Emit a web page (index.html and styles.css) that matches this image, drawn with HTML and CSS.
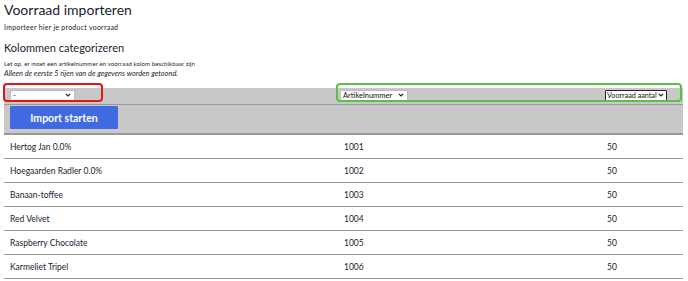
FILE: index.html
```html
<!DOCTYPE html>
<html lang="nl">

<head>
    <meta charset="UTF-8">
    <meta name="viewport" content="width=device-width, initial-scale=1.0">
    <title>Voorraad importeren</title>
    <link rel="stylesheet" href="styles.css">
</head>

<body>
    <div class="page">
        <h1>Voorraad importeren</h1>
        <p class="intro">Importeer hier je product voorraad</p>
        <h2>Kolommen categorizeren</h2>
        <p class="note">Let op, er moet een artikelnummer en voorraad kolom beschikbaar zijn</p>
        <p class="preview-note">Alleen de eerste 5 rijen van de gegevens worden getoond.</p>

        <div class="table-wrap">
            <table class="import-table">
                <thead>
                    <tr class="select-row">
                        <th class="col-name">
                            <select class="col-select select-empty">
                                <option>-</option>
                            </select>
                        </th>
                        <th class="col-code">
                            <select class="col-select select-code">
                                <option>Artikelnummer</option>
                            </select>
                        </th>
                        <th class="col-stock">
                            <select class="col-select select-focus">
                                <option>Voorraad aantal</option>
                            </select>
                        </th>
                    </tr>
                    <tr class="action-row">
                        <th colspan="3">
                            <button type="button" class="start-button">Import starten</button>
                        </th>
                    </tr>
                </thead>
                <tbody>
                    <tr><td>Hertog Jan 0.0%</td><td>1001</td><td>50</td></tr>
                    <tr><td>Hoegaarden Radler 0.0%</td><td>1002</td><td>50</td></tr>
                    <tr><td>Banaan-toffee</td><td>1003</td><td>50</td></tr>
                    <tr><td>Red Velvet</td><td>1004</td><td>50</td></tr>
                    <tr><td>Raspberry Chocolate</td><td>1005</td><td>50</td></tr>
                    <tr><td>Karmeliet Tripel</td><td>1006</td><td>50</td></tr>
                </tbody>
            </table>

            <!-- annotatie-kaders over de kolomkeuzes -->
            <div class="mark mark-red"></div>
            <div class="mark mark-green"></div>
        </div>
    </div>
</body>

</html>
```

FILE: styles.css
```css
body {
    margin: 0;
    background: #ffffff;
    font-family: "Lato", "Open Sans", sans-serif;
    color: #1c1c30;
}

.page {
    padding: 0 5px 0 4px;
}

h1 {
    margin: 0;
    padding-top: 1px;
    font-size: 14px;
    font-weight: 400;
    line-height: 18px;
}

.intro {
    margin: 4px 0 0;
    font-size: 7px;
    letter-spacing: 0.25px;
    line-height: 9px;
}

h2 {
    margin: 8px 0 0;
    font-size: 11px;
    font-weight: 400;
    line-height: 15px;
}

.note {
    margin: 5px 0 0;
    font-size: 6px;
    letter-spacing: 0.1px;
    line-height: 8px;
}

.preview-note {
    margin: 1px 0 0;
    font-size: 7.4px;
    font-style: italic;
    line-height: 10px;
}

.table-wrap {
    position: relative;
    margin-top: 9px;
}

.import-table {
    width: 100%;
    border-collapse: collapse;
    font-size: 8.5px;
}

.col-name {
    width: 326px;
}

.col-code {
    width: 262px;
}

.import-table th {
    background: #c8c8c8;
    text-align: left;
    font-weight: 400;
}

.select-row th {
    height: 16px;
    padding: 0 0 0 6px;
    border-bottom: 1px solid #999999;
    vertical-align: middle;
}

.select-row .col-code {
    padding-left: 4px;
}

.select-row .col-stock {
    padding-left: 3px;
}

.col-select {
    appearance: none;
    -webkit-appearance: none;
    display: block;
    height: 11px;
    margin-top: -2px;
    padding: 0 9px 0 2px;
    border: 1px solid #bbbbbb;
    border-radius: 1px;
    background: #ffffff url("data:image/svg+xml;utf8,<svg xmlns='http://www.w3.org/2000/svg' width='6' height='4' viewBox='0 0 6 4'><path d='M0.8 0.8 L3 3 L5.2 0.8' fill='none' stroke='%23222' stroke-width='1.2'/></svg>") no-repeat right 3px center;
    font-family: "Lato", sans-serif;
    font-size: 7.5px;
    line-height: 9px;
    color: #111111;
}

.select-empty {
    width: 65px;
}

.select-code {
    width: 68px;
}

.select-focus {
    width: 62px;
    padding-right: 7px;
    padding-left: 1px;
    border-color: #222222;
    font-size: 7.2px;
    background-position: right 2px center;
}

.action-row th {
    height: 27px;
    padding: 1px 0 0 6px;
    border-bottom: 2px solid #999999;
    vertical-align: top;
}

.start-button {
    display: block;
    width: 108px;
    height: 23px;
    border: none;
    border-radius: 1px;
    background-color: #4169e1;
    color: white;
    font-family: "Lato", sans-serif;
    font-size: 10.5px;
    font-weight: 700;
    cursor: pointer;
}

.import-table td {
    height: 23px;
    padding: 0 0 0 6px;
    border-bottom: 1px solid #9a9a9a;
    vertical-align: middle;
}

.import-table td:nth-child(2) {
    padding-left: 8px;
}

.import-table td:nth-child(3) {
    padding-left: 5px;
}

.mark {
    position: absolute;
    top: -5px;
    height: 15px;
    border: 2px solid;
    border-radius: 4px;
}

.mark-red {
    left: -1px;
    width: 96px;
    border-color: #e0161c;
}

.mark-green {
    left: 332px;
    width: 342px;
    border-color: #5cbf48;
}
```
